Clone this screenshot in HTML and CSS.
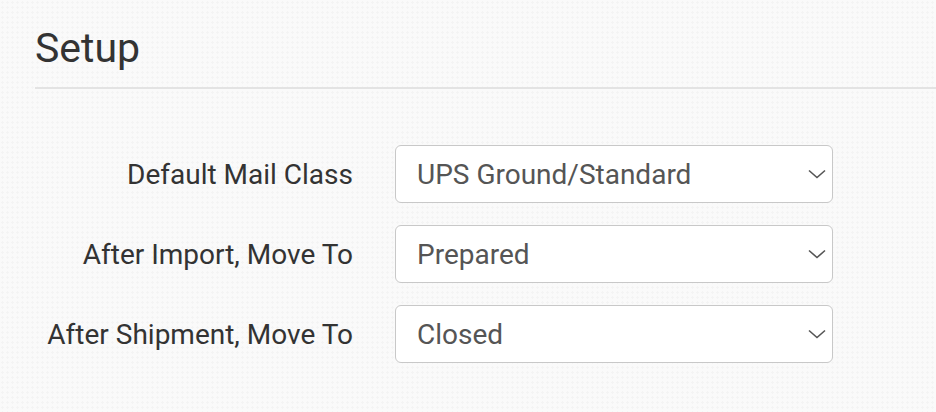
FILE: index.html
```html
<!DOCTYPE html>
<html lang="en">
<head>
    <meta charset="UTF-8">
    <meta name="viewport" content="width=device-width, initial-scale=1.0">
    <title>Setup</title>
    <link rel="stylesheet" href="styles.css">
</head>
<body>
    <div class="page-header">
        <h1>Setup</h1>
    </div>

    <form class="setup-form">
        <label class="field-label" for="mailClass">Default Mail Class</label>
        <div class="select-wrap">
            <select id="mailClass">
                <option>UPS Ground/Standard</option>
                <option>UPS 2nd Day Air</option>
                <option>UPS Next Day Air</option>
            </select>
            <svg class="chevron" width="18" height="10" viewBox="0 0 18 10"><path d="M1 1.5 L9 8.5 L17 1.5" fill="none" stroke="#555" stroke-width="1.6"/></svg>
        </div>

        <label class="field-label" for="afterImport">After Import, Move To</label>
        <div class="select-wrap">
            <select id="afterImport">
                <option>Prepared</option>
                <option>Awaiting Shipment</option>
            </select>
            <svg class="chevron" width="18" height="10" viewBox="0 0 18 10"><path d="M1 1.5 L9 8.5 L17 1.5" fill="none" stroke="#555" stroke-width="1.6"/></svg>
        </div>

        <label class="field-label" for="afterShipment">After Shipment, Move To</label>
        <div class="select-wrap">
            <select id="afterShipment">
                <option>Closed</option>
                <option>Shipped</option>
            </select>
            <svg class="chevron" width="18" height="10" viewBox="0 0 18 10"><path d="M1 1.5 L9 8.5 L17 1.5" fill="none" stroke="#555" stroke-width="1.6"/></svg>
        </div>
    </form>
</body>
</html>
```

FILE: styles.css
```css
body {
    margin: 0;
    font-family: Roboto, "Liberation Sans", Arial, sans-serif;
    color: #333;
    background-color: #fafafa;
    background-image: radial-gradient(#f4f4f4 1px, transparent 1.2px);
    background-size: 5px 5px;
}
.page-header {
    margin-left: 35px;
    padding-top: 24px;
    padding-bottom: 15px;
    border-bottom: 2px solid #e3e3e3;
}
.page-header h1 {
    margin: 0;
    font-size: 41px;
    line-height: 48px;
    font-weight: 400;
    color: #333;
}
.setup-form {
    display: grid;
    grid-template-columns: 353px 438px;
    column-gap: 42px;
    row-gap: 22px;
    margin-top: 56px;
    align-items: center;
}
.field-label {
    text-align: right;
    font-size: 28px;
    color: #333;
}
.select-wrap {
    position: relative;
}
.select-wrap select {
    display: block;
    width: 100%;
    height: 58px;
    padding: 0 40px 0 21px;
    border: 1px solid #c8c8c8;
    border-radius: 6px;
    background: #fff;
    font-family: inherit;
    font-size: 28px;
    color: #555;
    appearance: none;
    -webkit-appearance: none;
}
.chevron {
    position: absolute;
    right: 7px;
    top: 24px;
    pointer-events: none;
}
```
